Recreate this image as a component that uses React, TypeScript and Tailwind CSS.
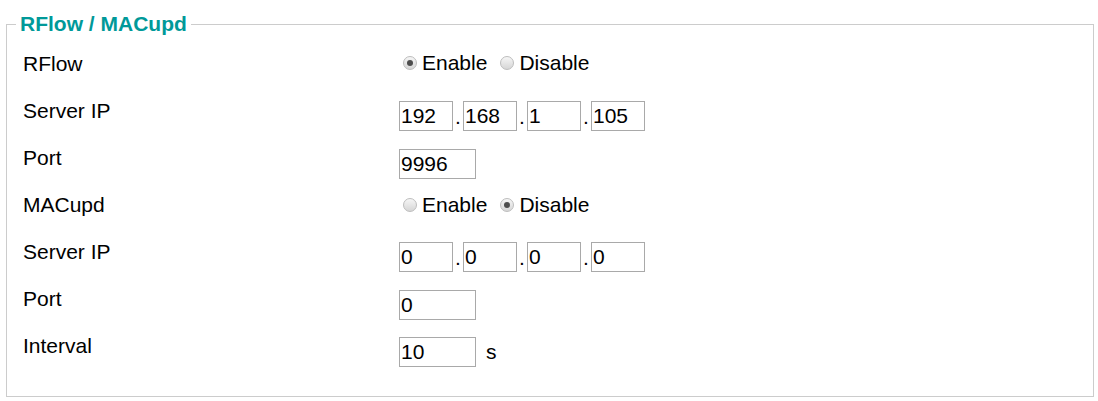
import { useState } from 'react';

function Radio({ checked, label, onClick }: { checked: boolean; label: string; onClick: () => void }) {
  return (
    <label className="flex items-center cursor-pointer" onClick={onClick}>
      <span className="ml-[4px] mr-[5px] w-[14px] h-[14px] rounded-full border border-[#bdbdbd] bg-gradient-to-b from-[#f6f6f6] to-[#d6d6d6] flex items-center justify-center">
        {checked && <span className="w-[6px] h-[6px] rounded-full bg-[#4d4d4d]" />}
      </span>
      <span>{label}</span>
    </label>
  );
}

function Box({ value, w = 'w-[54px]' }: { value: string; w?: string }) {
  return (
    <input
      defaultValue={value}
      className={`${w} h-[30px] border border-[#a9a9a9] px-[1px] text-[21px] text-black outline-none bg-white`}
    />
  );
}

function IpRow({ ip }: { ip: string[] }) {
  return (
    <div className="flex items-end">
      {ip.map((p, i) => (
        <div key={i} className="flex items-end">
          {i > 0 && <span className="w-[10px] text-center leading-[20px] mb-[4px]">.</span>}
          <Box value={p} />
        </div>
      ))}
    </div>
  );
}

function Row({ label, children }: { label: string; children: React.ReactNode }) {
  return (
    <div className="flex h-[47px] items-start">
      <div className="w-[376px] leading-[20px]">{label}</div>
      <div>{children}</div>
    </div>
  );
}

export default function App() {
  const [rflow, setRflow] = useState(true);
  const [macupd, setMacupd] = useState(false);

  return (
    <div className="bg-white w-[1098px] h-[401px] pt-[13px] pl-[6px] text-[21px] text-black" style={{ fontFamily: '"Liberation Sans", Arial, sans-serif' }}>
      <fieldset className="w-[1088px] border border-[#cccccc] pl-[16px] pr-[16px] pb-[13px] pt-[19px]">
        <legend className="ml-[-7px] px-[4px] text-[21px] font-bold text-[#009999] leading-[22px]">RFlow / MACupd</legend>
        <Row label="RFlow">
          <div className="flex items-center gap-[9px] leading-[20px] mt-[-1px]">
            <Radio checked={rflow} label="Enable" onClick={() => setRflow(true)} />
            <Radio checked={!rflow} label="Disable" onClick={() => setRflow(false)} />
          </div>
        </Row>
        <Row label="Server IP">
          <IpRow ip={['192', '168', '1', '105']} />
        </Row>
        <Row label="Port">
          <Box value="9996" w="w-[77px]" />
        </Row>
        <Row label="MACupd">
          <div className="flex items-center gap-[9px] leading-[20px]">
            <Radio checked={macupd} label="Enable" onClick={() => setMacupd(true)} />
            <Radio checked={!macupd} label="Disable" onClick={() => setMacupd(false)} />
          </div>
        </Row>
        <Row label="Server IP">
          <IpRow ip={['0', '0', '0', '0']} />
        </Row>
        <Row label="Port">
          <Box value="0" w="w-[77px]" />
        </Row>
        <Row label="Interval">
          <div className="flex items-center">
            <Box value="10" w="w-[77px]" />
            <span className="ml-[10px]">s</span>
          </div>
        </Row>
      </fieldset>
    </div>
  );
}
